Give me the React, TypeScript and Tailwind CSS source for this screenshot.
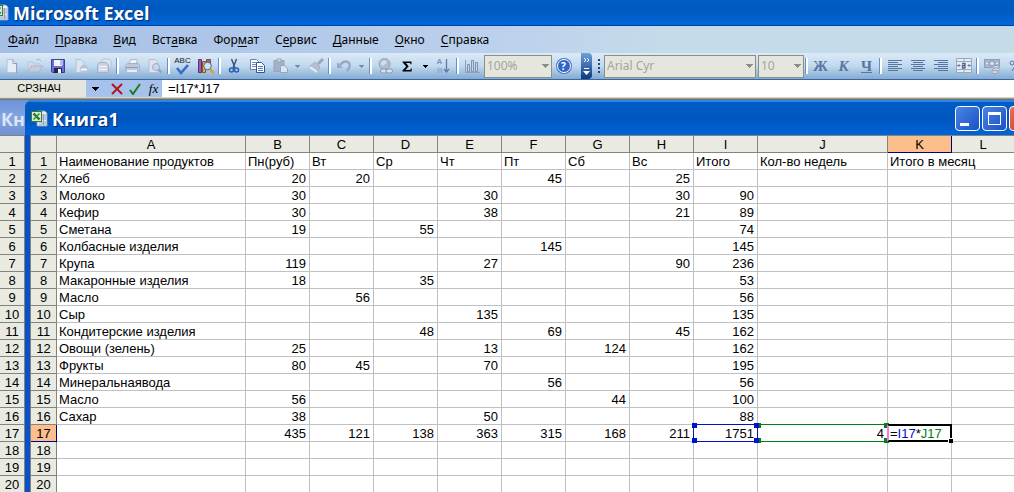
import React from "react";

type Cell = string | number | null;

const COLUMNS = ["A", "B", "C", "D", "E", "F", "G", "H", "I", "J", "K", "L"];

const ROWS: Cell[][] = [
  ["Наименование продуктов", "Пн(руб)", "Вт", "Ср", "Чт", "Пт", "Сб", "Вс", "Итого", "Кол-во недель", "Итого в месяц", null],
  ["Хлеб", 20, 20, null, null, 45, null, 25, null, null, null, null],
  ["Молоко", 30, null, null, 30, null, null, 30, 90, null, null, null],
  ["Кефир", 30, null, null, 38, null, null, 21, 89, null, null, null],
  ["Сметана", 19, null, 55, null, null, null, null, 74, null, null, null],
  ["Колбасные изделия", null, null, null, null, 145, null, null, 145, null, null, null],
  ["Крупа", 119, null, null, 27, null, null, 90, 236, null, null, null],
  ["Макаронные изделия", 18, null, 35, null, null, null, null, 53, null, null, null],
  ["Масло", null, 56, null, null, null, null, null, 56, null, null, null],
  ["Сыр", null, null, null, 135, null, null, null, 135, null, null, null],
  ["Кондитерские изделия", null, null, 48, null, 69, null, 45, 162, null, null, null],
  ["Овощи (зелень)", 25, null, null, 13, null, 124, null, 162, null, null, null],
  ["Фрукты", 80, 45, null, 70, null, null, null, 195, null, null, null],
  ["Минеральнаявода", null, null, null, null, 56, null, null, 56, null, null, null],
  ["Масло", 56, null, null, null, null, 44, null, 100, null, null, null],
  ["Сахар", 38, null, null, 50, null, null, null, 88, null, null, null],
  [null, 435, 121, 138, 363, 315, 168, 211, 1751, 4, null, null],
  Array(12).fill(null),
  Array(12).fill(null),
  Array(12).fill(null),
];

const MENU: [string, string, string][] = [
  ["", "Ф", "айл"],
  ["", "П", "равка"],
  ["", "В", "ид"],
  ["Вст", "а", "вка"],
  ["Фор", "м", "ат"],
  ["С", "е", "рвис"],
  ["", "Д", "анные"],
  ["", "О", "кно"],
  ["", "С", "правка"],
];

function Tool({ label, children }: { label: string; children: React.ReactNode }) {
  return (
    <button type="button" aria-label={label} className="flex h-6 w-[23px] shrink-0 items-center justify-center">
      {children}
    </button>
  );
}

function Arrow({ label, active = false }: { label: string; active?: boolean }) {
  return (
    <button type="button" aria-label={label} className={`flex h-6 w-[13px] shrink-0 items-center justify-center ${active ? "text-black" : "text-[#8089a0]"}`}>
      <Caret small />
    </button>
  );
}

function Caret({ small = false }: { small?: boolean }) {
  return small ? (
    <svg width="5" height="3" viewBox="0 0 5 3" fill="currentColor" shapeRendering="crispEdges" aria-hidden="true">
      <path d="M0 0h5v1H0zM1 1h3v1H1zM2 2h1v1H2z" />
    </svg>
  ) : (
    <svg width="7" height="4" viewBox="0 0 7 4" fill="currentColor" shapeRendering="crispEdges" aria-hidden="true">
      <path d="M0 0h7v1H0zM1 1h5v1H1zM2 2h3v1H2zM3 3h1v1H3z" />
    </svg>
  );
}

function Sep() {
  return <span className="mx-px h-4 w-[3px] shrink-0 border-l border-r-2 border-l-[#6a8ccb] border-r-white" />;
}

function Svg({ children }: { children: React.ReactNode }) {
  return (
    <svg width="18" height="18" viewBox="0 0 18 18" fill="none" aria-hidden="true" className="shrink-0">
      {children}
    </svg>
  );
}

function Combo({ label, value, className }: { label: string; value: string; className: string }) {
  return (
    <label className={`relative flex h-[23px] shrink-0 items-center border border-[#8c8f86] bg-[#e5e7de] text-[#a3a59b] ${className}`}>
      <select aria-label={label} defaultValue={value} className="h-full w-full appearance-none bg-transparent pl-0.5 text-[12px] outline-none">
        <option>{value}</option>
      </select>
      <span className="pointer-events-none absolute right-0.5 text-[#8c8e86]">
        <Caret />
      </span>
    </label>
  );
}

function ExcelIcon() {
  return (
    <svg width="17" height="17" viewBox="0 0 17 17" aria-hidden="true" className="shrink-0">
      <path d="M6 1h8l2 2v13H6z" fill="#e8f0f8" stroke="#7f9ac0" />
      <path d="M10 5h5M10 7h5M10 9h5M8 12h7M8 14h7M12.5 4v11" stroke="#8fa6c4" />
      <rect x="0.5" y="1.5" width="10" height="10" fill="#d9ead6" stroke="#3a7a3a" />
      <path d="M2.5 3.5l6 6" stroke="#1c7a26" strokeWidth="2.4" />
      <path d="M8.5 3.5l-6 6" stroke="#2f9a3a" strokeWidth="1.6" />
    </svg>
  );
}

function AlignIcon({ kind }: { kind: "left" | "center" | "right" }) {
  const x = kind === "left" ? 2 : kind === "center" ? 4 : 6;
  return (
    <svg width="18" height="18" viewBox="0 0 18 18" shapeRendering="crispEdges" fill="#55749f" aria-hidden="true">
      {[3, 5, 7, 9, 11, 13].map((y, i) => (
        <rect key={y} x={i % 2 ? x : 2} y={y} width={i % 2 ? 10 : 14} height="1" />
      ))}
    </svg>
  );
}

function StandardToolbar() {
  return (
    <div role="toolbar" aria-label="Стандартная" className="flex h-[26px] shrink-0 items-center">
      <Tool label="Создать">
        <Svg>
          <path d="M4 2.500h6l4 4v9H4z" fill="#e7ebf2" stroke="#b4c0d4" />
          <path d="M10 2.500v4h4M13.500 7v9" stroke="#8fa1c0" />
        </Svg>
      </Tool>
      <Tool label="Открыть">
        <Svg>
          <path d="M2 14V5h5l1 2h6v2" fill="#d4dbe7" stroke="#b8c3d4" />
          <path d="M2 15l3-6h12l-4 6z" fill="#c2ccdc" stroke="#a9b6ca" />
          <path d="M10 3q3-2 5 1" stroke="#a9b6ca" />
        </Svg>
      </Tool>
      <Tool label="Сохранить">
        <Svg>
          <path d="M2.500 2.500h13v13h-12l-1-1z" fill="#6c70d4" stroke="#3a409c" />
          <rect x="5" y="3" width="8" height="6" fill="#f2f5ff" />
          <path d="M11 3h3v5h-3z" fill="#b6bbec" />
          <rect x="5" y="11" width="8" height="5" fill="#24264c" />
          <rect x="9" y="12" width="3" height="4" fill="#f1f2fa" />
        </Svg>
      </Tool>
      <Tool label="Разрешения">
        <Svg>
          <path d="M4 2.500h5l3 3v10H4z" fill="#dde4ee" stroke="#b4c0d4" />
          <circle cx="12" cy="12" r="4" fill="#b8c3d5" />
          <path d="M9 12.500h6" stroke="#f4f7fb" strokeWidth="2" />
        </Svg>
      </Tool>
      <Tool label="Сообщение">
        <Svg>
          <path d="M7 6V3.500l2-1.500h5l2 2v7h-3" fill="#dfe5ee" stroke="#b2bfd2" />
          <path d="M2.500 7.500l2-2h7l2 2v8h-11z" fill="#c6d0df" stroke="#a4b3c9" />
          <path d="M4 9.500h8M4 12.500h8" stroke="#eef2f7" strokeWidth="1.500" />
        </Svg>
      </Tool>
      <Sep />
      <Tool label="Печать">
        <Svg>
          <path d="M6 7l1.500-4.500h7L13 7" fill="#eef2f8" stroke="#b0bccf" />
          <path d="M2.500 8.500l2-2h11l1 2v5h-14z" fill="#bdc8d9" stroke="#a4b2c8" />
          <path d="M4 13h10v2H4z" fill="#e9eef5" />
          <path d="M3 10.500h12" stroke="#8b9db9" />
        </Svg>
      </Tool>
      <Tool label="Предварительный просмотр">
        <Svg>
          <path d="M3 2.500h6l3 3v10H3z" fill="#dce3ee" stroke="#b4c0d4" />
          <circle cx="10" cy="10" r="3.500" fill="#c9d6e8" stroke="#9aabc6" />
          <path d="M12.500 12.500l3 3" stroke="#8fa2c0" strokeWidth="2" />
        </Svg>
      </Tool>
      <Sep />
      <Tool label="Орфография">
        <span className="flex flex-col items-center font-['Liberation_Sans',sans-serif] text-[8px] leading-[6px] text-[#20242c]">
          ABC
          <svg width="14" height="11" viewBox="0 0 14 11" fill="none" aria-hidden="true">
            <path d="M2 4l4 5 7-8" stroke="#3a6cc8" strokeWidth="2.600" />
          </svg>
        </span>
      </Tool>
      <Tool label="Справочные материалы">
        <Svg>
          <path d="M1.500 2.500h3v13h-3z" fill="#9a5bb0" stroke="#5c3270" />
          <path d="M5.500 4.500h3v11h-3z" fill="#e0a650" stroke="#8a5a18" />
          <path d="M9.500 2.500h4v9h-4z" fill="#c95a5a" stroke="#5c5a6a" />
          <circle cx="10.500" cy="9" r="3.800" fill="#cfe2f6" stroke="#50628a" />
          <path d="M13 12l3.500 4" stroke="#e0a020" strokeWidth="2.600" />
        </Svg>
      </Tool>
      <Sep />
      <Tool label="Вырезать">
        <Svg>
          <path d="M6.500 2l3.500 9M11.500 2L8 11" stroke="#3d4f78" strokeWidth="1.400" />
          <circle cx="6.500" cy="13" r="2" stroke="#2b62b8" strokeWidth="1.600" />
          <circle cx="11.500" cy="13" r="2" stroke="#2b62b8" strokeWidth="1.600" />
        </Svg>
      </Tool>
      <Tool label="Копировать">
        <Svg>
          <path d="M2.500 2.500h6l2 2v8h-8z" fill="#fff" stroke="#6783b8" />
          <path d="M4 5.500h4M4 7.500h4M4 9.500h4" stroke="#6d8cc4" />
          <path d="M8.500 5.500h5l3 3v7h-8z" fill="#fff" stroke="#2f569c" />
          <path d="M10 9.500h5M10 11.500h5M10 13.500h5" stroke="#4e78c0" />
        </Svg>
      </Tool>
      <Tool label="Вставить">
        <Svg>
          <path d="M3 3.500h10v11H3z" fill="#a5b0c6" stroke="#98a5bd" />
          <path d="M6 2h4v3H6z" fill="#cfd6e2" stroke="#98a5bd" />
          <path d="M9.500 8.500h4l3 3v4h-7z" fill="#dde3ed" stroke="#95a4bf" />
        </Svg>
      </Tool>
      <Arrow label="Параметры вставки" />
      <Tool label="Формат по образцу">
        <Svg>
          <path d="M16 2l-5 5" stroke="#98a7c1" strokeWidth="3" />
          <path d="M8 5l5 5-3 5-8-5z" fill="#b4bfd2" stroke="#a3b0c7" />
          <path d="M3 10l7 5" stroke="#e9edf4" strokeWidth="2" />
        </Svg>
      </Tool>
      <Sep />
      <Tool label="Отменить">
        <Svg>
          <path d="M5 8q4-5 8-3 4 3-1 9" stroke="#98a7c4" strokeWidth="2.400" />
          <path d="M2 5v6h6z" fill="#98a7c4" />
        </Svg>
      </Tool>
      <Arrow label="Список отмены" />
      <Sep />
      <Tool label="Гиперссылка">
        <Svg>
          <circle cx="8.500" cy="7" r="5.500" fill="#b0bccf" stroke="#96a4bd" />
          <path d="M5 5q3-3 5-1t-2 4-3-3" fill="#d6dde8" />
          <rect x="4.500" y="12" width="6" height="4" rx="2" fill="#dbe2ec" stroke="#8796b2" />
          <rect x="10" y="12" width="6.500" height="4" rx="2" fill="#dbe2ec" stroke="#8796b2" />
        </Svg>
      </Tool>
      <Tool label="Автосумма">
        <svg width="11" height="11" viewBox="0 0 11 11" fill="#000" aria-hidden="true">
          <path d="M0.500 0.500h9v2.800h-.9l-.5-1.400H3.900L6.700 5.300 3.400 8.900h4.900l.7-1.500h.9l-.4 3.100H.5v-1l3.700-4.100L.5 1.300z" />
        </svg>
      </Tool>
      <Arrow label="Другие функции" active />
      <Tool label="Сортировка по возрастанию">
        <span className="flex items-center gap-px text-[#7d93b8]">
          <span className="flex flex-col font-['Liberation_Sans',sans-serif] text-[8px] leading-[9px] font-bold">
            <span>А</span>
            <span className="opacity-60">Я</span>
          </span>
          <svg width="7" height="16" viewBox="0 0 7 16" fill="none" stroke="#5f7aa8" aria-hidden="true">
            <path d="M3.500 1v13M1 11l2.500 3L6 11" strokeWidth="1.300" />
          </svg>
        </span>
      </Tool>
      <Sep />
      <Tool label="Мастер диаграмм">
        <Svg>
          <path d="M2.500 3v12.500h14" stroke="#8fa0bc" />
          <path d="M4.500 7.500h2v7h-2zM8.500 3.500h2v11h-2zM12.500 5.500h2v9h-2z" fill="#c8d2e2" stroke="#7f92b2" />
        </Svg>
      </Tool>
      <Combo label="Масштаб" value="100%" className="ml-px w-[68px]" />
      <Tool label="Справка по Microsoft Excel">
        <span className="flex size-[14px] items-center justify-center rounded-full border border-white bg-[#2f66c8] text-[10px] font-bold text-white ring-1 ring-[#4a76b8]">?</span>
      </Tool>
      <button type="button" aria-label="Параметры панели" className="ml-1.5 flex h-[26px] w-[11px] shrink-0 flex-col items-center justify-between rounded-r bg-linear-to-b from-[#6f9fdc] to-[#0a3a80] py-1">
        <svg width="8" height="6" viewBox="0 0 8 6" fill="none" stroke="#fff" aria-hidden="true">
          <path d="M1 1l2 2-2 2M4 1l2 2-2 2" />
        </svg>
        <svg width="7" height="7" viewBox="0 0 7 7" fill="#fff" aria-hidden="true">
          <path d="M1 0h5v1H1zM0 3h7L3.500 7z" />
        </svg>
      </button>
    </div>
  );
}

function FormatToolbar() {
  const glyph = "font-['Liberation_Serif',serif] text-[15px] leading-none font-bold text-[#58759f]";
  return (
    <div role="toolbar" aria-label="Форматирование" className="flex h-[26px] shrink-0 items-center pl-1">
      <span className="mr-1 flex w-0.5 flex-col gap-0.5">
        {[0, 1, 2, 3].map((i) => (
          <span key={i} className="size-0.5 bg-[#274176]" />
        ))}
      </span>
      <Combo label="Шрифт" value="Arial Cyr" className="w-[152px]" />
      <Combo label="Размер" value="10" className="ml-0.5 w-[46px]" />
      <Sep />
      <Tool label="Полужирный">
        <span className={glyph}>Ж</span>
      </Tool>
      <Tool label="Курсив">
        <span className={`${glyph} italic`}>К</span>
      </Tool>
      <Tool label="Подчеркнутый">
        <span className={`${glyph} underline`}>Ч</span>
      </Tool>
      <Sep />
      <Tool label="По левому краю">
        <AlignIcon kind="left" />
      </Tool>
      <Tool label="По центру">
        <AlignIcon kind="center" />
      </Tool>
      <Tool label="По правому краю">
        <AlignIcon kind="right" />
      </Tool>
      <Tool label="Объединить и поместить в центре">
        <Svg>
          <path d="M1.500 1.500h15v14h-15z" fill="#e9edf3" stroke="#9aa7bd" />
          <path d="M1 4.500h16M1 12.500h16M9 1v3M9 13v3" stroke="#9aa7bd" />
          <path d="M2 8.500h3.500M4 7v3M12.500 8.500H16M14 7v3" stroke="#6d7f9f" />
          <path d="M7 6.500h3v5M10 8.500H7.500v2.500H10" stroke="#506890" strokeWidth="1.400" />
        </Svg>
      </Tool>
      <Sep />
      <Tool label="Денежный формат">
        <Svg>
          <rect x="1.500" y="2.500" width="15" height="8" fill="#a9b6cb" stroke="#8f9fb9" />
          <circle cx="9" cy="6.500" r="2.500" fill="#d8e0eb" stroke="#8394b1" />
          <path d="M3 6.500h2M13 6.500h2" stroke="#e9eef5" />
          <ellipse cx="13" cy="10" rx="3.500" ry="1.500" fill="#d8dfe9" stroke="#8f9fb9" />
          <ellipse cx="13" cy="12.500" rx="3.500" ry="1.500" fill="#d8dfe9" stroke="#8f9fb9" />
          <ellipse cx="12" cy="15" rx="3.500" ry="1.500" fill="#d8dfe9" stroke="#8f9fb9" />
        </Svg>
      </Tool>
      <Tool label="Процентный формат">
        <Svg>
          <circle cx="6" cy="6" r="2" stroke="#58759f" />
          <circle cx="13" cy="11" r="2" stroke="#58759f" />
          <path d="M13 3L6 14" stroke="#58759f" />
        </Svg>
      </Tool>
    </div>
  );
}

function Handles({ color }: { color: string }) {
  return (
    <>
      <span className={`absolute -top-0.5 -left-0.5 size-[5px] ${color}`} />
      <span className={`absolute -top-0.5 -right-0.5 size-[5px] ${color}`} />
      <span className={`absolute -bottom-0.5 -left-0.5 size-[5px] ${color}`} />
      <span className={`absolute -right-0.5 -bottom-0.5 size-[5px] ${color}`} />
    </>
  );
}

function GridCell({ value, row, col }: { value: Cell; row: number; col: number }) {
  const total = row === 16;
  const spills = row === 0 && col >= 10;
  const edge = spills || col === 11 ? "" : "border-r";
  return (
    <td className={`relative h-[17px] border-b border-[#c0c0c0] pt-px pr-[3px] pl-0.5 leading-[15px] whitespace-nowrap ${edge} ${typeof value === "number" ? "text-right" : "text-left"}`}>
      {value}
      {total && col === 8 && (
        <span className="absolute -inset-px z-20 border border-[#0010d0]">
          <Handles color="bg-[#0010d0]" />
        </span>
      )}
      {total && col === 9 && (
        <span className="absolute -inset-px z-10 border border-[#008010]">
          <Handles color="bg-[#008010]" />
        </span>
      )}
      {total && col === 10 && (
        <>
          <span className="text-black">=</span>
          <span className="text-[#0010d0]">I17</span>*<span className="text-[#008010]">J17</span>
          <span className="absolute -inset-px z-20 border-2 border-black border-l-[#f080e0]">
            <span className="absolute -right-[3px] -bottom-[3px] size-[5px] border-t border-l border-white bg-black" />
          </span>
        </>
      )}
    </td>
  );
}

const headBase = "border-b h-[17px] px-0 pb-0 pt-px text-center font-normal leading-[15px]";
const headPlain = "border-[#83857a] bg-[#e9ebe2]";
const headActive = "border-[#000080] bg-[#fcbf8c]";

function Sheet() {
  return (
    <table className="w-full table-fixed border-separate border-spacing-0 border-t border-l border-[#83857a] bg-white text-[13px]">
      <colgroup>
        <col className="w-[26px]" />
        <col className="w-[189px]" />
        {COLUMNS.slice(1, 9).map((c) => (
          <col key={c} className="w-16" />
        ))}
        <col className="w-[130px]" />
        <col className="w-16" />
        <col />
      </colgroup>
      <thead>
        <tr>
          <th aria-label="Выделить все" className={`${headBase} border-r ${headPlain}`} />
          {COLUMNS.map((c) => (
            <th key={c} scope="col" className={`${headBase} ${c === "L" ? "" : "border-r"} ${c === "K" ? headActive : headPlain}`}>
              {c}
            </th>
          ))}
        </tr>
      </thead>
      <tbody>
        {ROWS.map((cells, r) => (
          <tr key={r}>
            <th scope="row" className={`${headBase} border-r ${r === 16 ? headActive : headPlain}`}>
              {r + 1}
            </th>
            {cells.map((value, c) => (
              <GridCell key={c} value={value} row={r} col={c} />
            ))}
          </tr>
        ))}
      </tbody>
    </table>
  );
}

function BackWindow() {
  return (
    <section aria-label="Книга" className="w-[25px] shrink-0 overflow-hidden bg-[#e9ebe2] text-[13px]">
      <h2 className="h-[35px] overflow-hidden bg-linear-to-b from-[#6d93d8] via-[#84a4e0] to-[#6f90d4] pt-1.5 pl-px font-['Open_Sans','Noto_Sans',sans-serif] text-[18px] leading-[26px] font-bold text-[#dbe5f7]">Кн</h2>
      <div className="h-[18px] border-t border-r border-b border-[#83857a]" />
      {ROWS.map((_, r) => (
        <div key={r} className="h-[17px] border-r border-b border-[#83857a] pt-px text-center leading-[15px]">
          {r + 1}
        </div>
      ))}
    </section>
  );
}

export default function App() {
  const titleText = "font-['Open_Sans','Noto_Sans',sans-serif] font-bold text-white [text-shadow:1px_1px_1px_#06286e]";
  const caption = "flex size-[25px] shrink-0 rounded border border-white bg-linear-to-br";
  return (
    <main className="w-full overflow-hidden bg-[#0058c8] font-['Liberation_Sans',Arial,sans-serif] text-black">
      <header className="flex h-[26px] items-center overflow-hidden border-b border-[#0040a0] bg-linear-to-b from-[#005cc4] via-[#0058c0] via-45% to-[#0068dc]">
        <span className="-ml-2 mr-1">
          <ExcelIcon />
        </span>
        <h1 className={`${titleText} text-[18px] leading-6`}>Microsoft Excel</h1>
      </header>

      <div className="font-['Noto_Sans','DejaVu_Sans',sans-serif]">
        <nav className="flex h-[27px] items-center bg-linear-to-r from-[#a4bfe6] via-[#bcd1ec] via-50% to-[#c4dbea] to-65%">
          {MENU.map(([before, key, after]) => (
            <button key={before + key + after} type="button" className="px-2 text-[12px] leading-5">
              {before}
              <span className="underline underline-offset-2">{key}</span>
              {after}
            </button>
          ))}
        </nav>

        <div className="flex h-[27px] gap-0.5 overflow-hidden border-b border-[#3a64a4] bg-linear-to-b from-[#dceaf6] via-[#c0d9ef] via-50% to-[#83abd2]">
          <StandardToolbar />
          <FormatToolbar />
        </div>
      </div>

      <div className="flex h-[17px] items-stretch bg-[#a6c2ea] text-[13px]">
        <input aria-label="Имя" defaultValue="СРЗНАЧ" className="w-[86px] shrink-0 bg-[#e5e7de] pr-2 text-center text-[11px] outline-none" />
        <button type="button" aria-label="Список имён" className="flex w-[19px] shrink-0 items-center justify-center">
          <Caret />
        </button>
        <button type="button" aria-label="Отмена" className="flex w-6 shrink-0 items-center justify-center">
          <svg width="12" height="12" viewBox="0 0 12 12" fill="none" stroke="#b01818" strokeWidth="2" aria-hidden="true">
            <path d="M1 1l10 10M11 1L1 11" />
          </svg>
        </button>
        <button type="button" aria-label="Ввод" className="flex w-3 shrink-0 items-center justify-center">
          <svg width="12" height="12" viewBox="0 0 12 12" fill="none" stroke="#108018" strokeWidth="2" aria-hidden="true">
            <path d="M1 7l3 4 7-10" />
          </svg>
        </button>
        <button type="button" aria-label="Вставка функции" className="w-[21px] shrink-0 pl-1 font-['Liberation_Serif',serif] text-[13px] leading-4 italic">
          fx
        </button>
        <input aria-label="Строка формул" defaultValue="=I17*J17" className="min-w-0 flex-1 bg-white pl-1.5 outline-none" />
      </div>
      <div className="h-[3px] border-t border-b border-t-[#d8d6ca] border-b-[#6f7478] bg-[#9c9a8c]" />

      <div className="flex bg-[#6d93d8]">
        <BackWindow />
        <section aria-label="Книга1" className="min-w-0 flex-1 overflow-hidden rounded-tl-lg bg-[#0c50c8]">
          <header className="flex h-[35px] items-center overflow-hidden border-t-2 border-[#2f86e0] bg-linear-to-b from-[#005cc8] via-[#0056be] via-50% to-[#0064d8] pl-1.5">
            <ExcelIcon />
            <h2 className={`${titleText} ml-1 text-[18px] leading-6`}>Книга1</h2>
            <div className="-mr-5 ml-auto flex shrink-0 gap-0.5">
              <button type="button" aria-label="Свернуть" className={`${caption} items-end from-[#4a84e4] to-[#1c50c4] pb-1 pl-1`}>
                <span className="h-[3px] w-[9px] bg-white" />
              </button>
              <button type="button" aria-label="Развернуть" className={`${caption} items-center justify-center from-[#4a84e4] to-[#1c50c4]`}>
                <span className="h-[13px] w-[13px] border border-t-[3px] border-white" />
              </button>
              <button type="button" aria-label="Закрыть" className={`${caption} items-center justify-center from-[#e8705c] to-[#c83010] text-white`}>
                <svg width="13" height="13" viewBox="0 0 13 13" stroke="#fff" strokeWidth="2" aria-hidden="true">
                  <path d="M1 1l11 11M12 1L1 12" />
                </svg>
              </button>
            </div>
          </header>
          <div className="border-l-4 border-[#0c50c8] pl-px">
            <Sheet />
          </div>
        </section>
      </div>
    </main>
  );
}
